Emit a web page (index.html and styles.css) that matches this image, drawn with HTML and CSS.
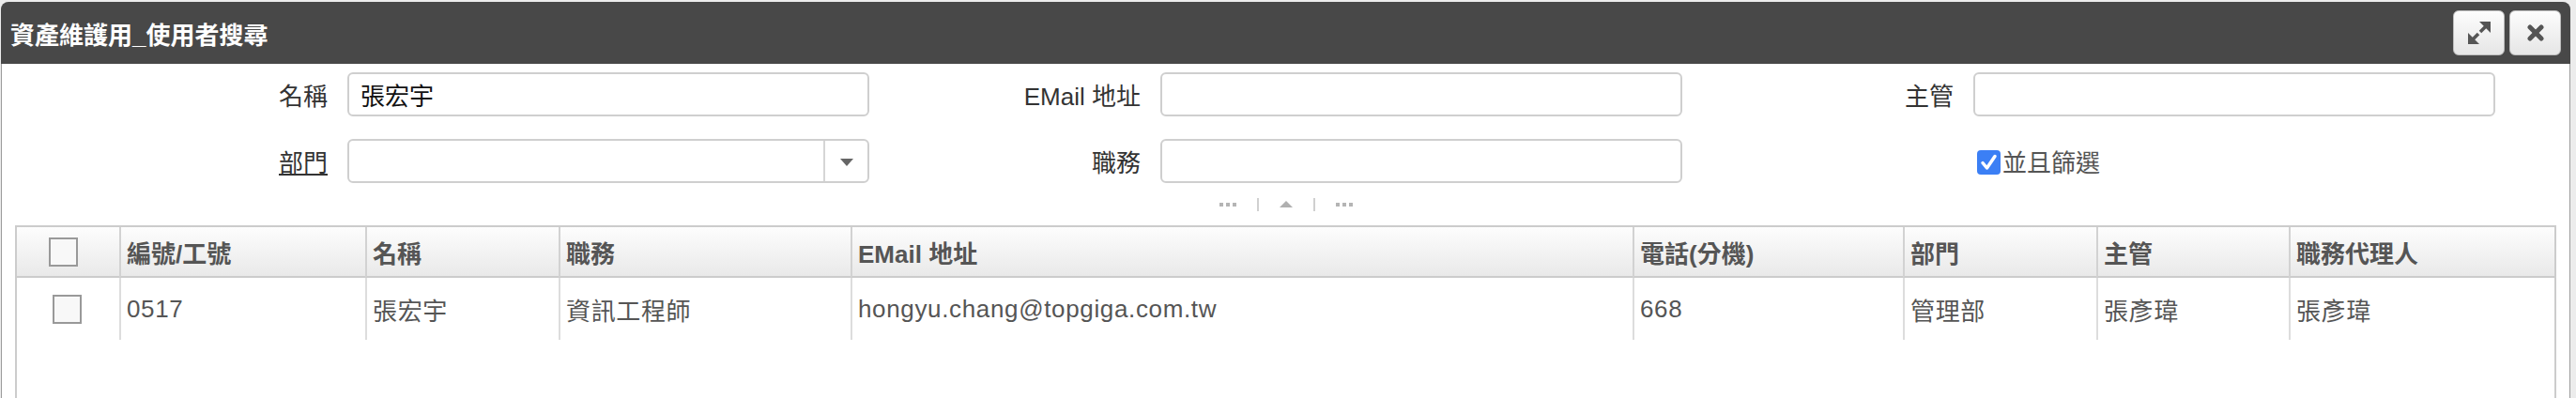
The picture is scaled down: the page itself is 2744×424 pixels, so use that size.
FILE: index.html
```html
<!DOCTYPE html>
<html lang="zh-Hant">
<head>
  <meta charset="UTF-8" />
  <meta name="viewport" content="width=device-width, initial-scale=1.0"/>
  <title>資產維護用_使用者搜尋</title>
  <link rel="stylesheet" href="styles.css">
</head>
<body>

  <div class="dialog">
    <div class="dialog-title">
      <span class="title-text">資產維護用_使用者搜尋</span>
      <div class="title-buttons">
        <button class="title-btn" title="最大化">
          <svg width="24" height="24" viewBox="0 0 24 24">
            <polygon points="12,0 24,0 24,12" fill="#555"/>
            <polygon points="0,12 0,24 12,24" fill="#555"/>
            <line x1="19" y1="5" x2="13" y2="11" stroke="#555" stroke-width="3.5"/>
            <line x1="5" y1="19" x2="11" y2="13" stroke="#555" stroke-width="3.5"/>
          </svg>
        </button>
        <button class="title-btn" title="關閉">
          <svg width="18" height="18" viewBox="0 0 18 18">
            <line x1="3" y1="3" x2="15" y2="15" stroke="#555" stroke-width="5" stroke-linecap="round"/>
            <line x1="15" y1="3" x2="3" y2="15" stroke="#555" stroke-width="5" stroke-linecap="round"/>
          </svg>
        </button>
      </div>
    </div>

    <div class="dialog-body">
      <form class="search-form">
        <div class="field">
          <label>名稱</label>
          <input type="text" class="text-input" value="張宏宇" />
        </div>
        <div class="field">
          <label>EMail 地址</label>
          <input type="text" class="text-input" />
        </div>
        <div class="field">
          <label>主管</label>
          <input type="text" class="text-input" />
        </div>

        <div class="field">
          <label class="link-label">部門</label>
          <div class="combo">
            <span class="combo-value"></span>
            <span class="combo-btn">
              <svg width="14" height="8" viewBox="0 0 14 8"><polygon points="0,0 14,0 7,8" fill="#666"/></svg>
            </span>
          </div>
        </div>
        <div class="field">
          <label>職務</label>
          <input type="text" class="text-input" />
        </div>
        <div class="field">
          <label></label>
          <div class="check-field">
            <span class="check-on">
              <svg width="25" height="26" viewBox="0 0 25 26"><path d="M6 13.5 L10.5 19 L19 6.5" fill="none" stroke="#fff" stroke-width="3.5" stroke-linecap="round" stroke-linejoin="round"/></svg>
            </span>
            <span class="check-text">並且篩選</span>
          </div>
        </div>
      </form>

      <div class="splitter">
        <span class="dots"><i></i><i></i><i></i></span>
        <span class="split-line"></span>
        <span class="arrow-up"></span>
        <span class="split-line"></span>
        <span class="dots"><i></i><i></i><i></i></span>
      </div>

      <div class="grid">
        <div class="grid-row grid-head">
          <div class="cell cell-check"><span class="box head-box"></span></div>
          <div class="cell">編號/工號</div>
          <div class="cell">名稱</div>
          <div class="cell">職務</div>
          <div class="cell">EMail 地址</div>
          <div class="cell">電話(分機)</div>
          <div class="cell">部門</div>
          <div class="cell">主管</div>
          <div class="cell">職務代理人</div>
        </div>
        <div class="grid-row grid-data">
          <div class="cell cell-check"><span class="box row-box"></span></div>
          <div class="cell">0517</div>
          <div class="cell">張宏宇</div>
          <div class="cell">資訊工程師</div>
          <div class="cell">hongyu.chang@topgiga.com.tw</div>
          <div class="cell">668</div>
          <div class="cell">管理部</div>
          <div class="cell">張彥瑋</div>
          <div class="cell">張彥瑋</div>
        </div>
      </div>
    </div>
  </div>

</body>
</html>
```

FILE: styles.css
```css
body {
  margin: 0;
  height: 424px;
  overflow: hidden;
  background: #ececec;
  font-family: "Liberation Sans", "Noto Sans CJK TC", sans-serif;
  font-size: 26px;
  color: #333;
}
.dialog {
  box-sizing: border-box;
  width: 2737px;
  height: 480px;
  margin: 2px 0 0 1px;
  background: white;
  border: 1px solid #9c9c9c;
  border-top: none;
  border-radius: 9px 9px 0 0;
}
.dialog-title {
  height: 66px;
  margin: 0 -1px;
  padding: 0 10px 0 10px;
  background: #484848;
  border-radius: 8px 8px 0 0;
  display: flex;
  align-items: center;
  justify-content: space-between;
}
.title-text {
  color: white;
  font-weight: bold;
  font-size: 26px;
}
.title-buttons {
  display: flex;
  gap: 5px;
}
.title-btn {
  box-sizing: border-box;
  width: 55px;
  height: 48px;
  padding: 0;
  display: flex;
  align-items: center;
  justify-content: center;
  background: linear-gradient(#fdfdfd, #e6e6e6);
  border: 1px solid #bdbdbd;
  border-radius: 6px;
}

/* search form */
.search-form {
  display: grid;
  grid-template-columns: repeat(3, 866px);
  row-gap: 24px;
  padding: 9px 0 0 58px;
}
.field {
  display: flex;
  align-items: center;
  height: 47px;
}
.field label {
  flex: 1;
  text-align: right;
  padding-right: 21px;
  color: #333;
}
.link-label {
  text-decoration: underline;
}
.text-input, .combo {
  box-sizing: border-box;
  width: 556px;
  height: 47px;
  padding: 0 12px;
  border: 2px solid #cfcfcf;
  border-radius: 6px;
  font-family: inherit;
  font-size: 26px;
  color: #111;
  outline: none;
}
.combo {
  display: flex;
  padding: 0;
}
.combo-value {
  flex: 1;
}
.combo-btn {
  width: 45px;
  border-left: 2px solid #d6d6d6;
  display: flex;
  align-items: center;
  justify-content: center;
  padding-top: 3px;
}
.check-field {
  width: 556px;
  display: flex;
  align-items: center;
  padding-left: 4px;
  box-sizing: border-box;
}
.check-on {
  width: 25px;
  height: 26px;
  background: #3b7ff5;
  border-radius: 4px;
  display: flex;
  margin-top: 3px;
}
.check-text {
  color: #555;
  margin-left: 2px;
}

/* splitter */
.splitter {
  height: 45px;
  display: flex;
  align-items: center;
  justify-content: center;
  gap: 22px;
}
.dots {
  display: flex;
  gap: 3px;
}
.dots i {
  width: 4px;
  height: 4px;
  background: #b5b5b5;
}
.split-line {
  width: 2px;
  height: 14px;
  background: #d0d0d0;
}
.arrow-up {
  width: 0;
  height: 0;
  border-left: 7px solid transparent;
  border-right: 7px solid transparent;
  border-bottom: 7px solid #b0b0b0;
}

/* result grid */
.grid {
  margin: 0 14px;
  height: 300px;
  border: 2px solid #cccccc;
}
.grid-row {
  display: grid;
  grid-template-columns: 109px 262px 206px 311px 833px 288px 206px 205px 283px;
}
.cell {
  display: flex;
  align-items: center;
  padding-left: 6px;
  color: #555;
  white-space: nowrap;
  overflow: hidden;
}
.grid-head .cell {
  height: 52px;
  font-weight: bold;
  background: linear-gradient(#fdfdfd, #e9e9e9);
  border-bottom: 2px solid #cccccc;
}
.grid-head .cell + .cell {
  border-left: 2px solid #d2d2d2;
}
.grid-data .cell {
  height: 66px;
  letter-spacing: 0.65px;
}
.grid-data .cell + .cell {
  border-left: 2px solid #dddddd;
}
.cell-check {
  padding-left: 0;
}
.box {
  box-sizing: border-box;
  width: 31px;
  height: 31px;
  border: 2px solid #999;
  background: #f8f8f8;
}
.head-box {
  margin-left: 34px;
}
.row-box {
  margin-left: 38px;
}
```
